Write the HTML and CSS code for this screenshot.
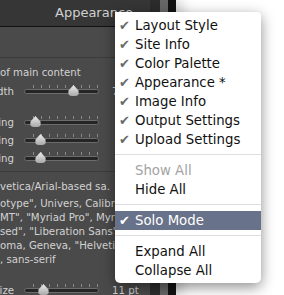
FILE: index.html
```html
<!DOCTYPE html>
<html lang="en">
<head>
  <meta charset="UTF-8">
  <title>Appearance panel menu</title>
  <link rel="stylesheet" href="styles.css">
</head>
<body>
  <div class="screen">
    <section class="panel">
      <div class="panel-body">
        <header class="panel-head">Appearance</header>
        <div class="group group-top"></div>
        <div class="group">
          <p class="note">of main content</p>
          <div class="row">
            <span class="lbl"><span>Width</span></span>
            <div class="slider"><div class="track"></div><div class="thumb" style="left:44px"></div></div>
            <span class="val">75</span>
          </div>
          <div class="row row-gap">
            <span class="lbl"><span>Spacing</span></span>
            <div class="slider"><div class="track"></div><div class="thumb" style="left:6px"></div></div>
          </div>
          <div class="row">
            <span class="lbl"><span>Padding</span></span>
            <div class="slider"><div class="track"></div><div class="thumb" style="left:11px"></div></div>
          </div>
          <div class="row">
            <span class="lbl"><span>Spacing</span></span>
            <div class="slider"><div class="track"></div><div class="thumb" style="left:11px"></div></div>
          </div>
        </div>
        <div class="group group-font">
          <p class="pick">vetica/Arial-based sa.</p>
          <div class="stack">
            <p>otype", Univers, Calibri, "Gill Sans",</p>
            <p>MT", "Myriad Pro", Myriad, "DejaVu</p>
            <p>sed", "Liberation Sans", "Nimbus</p>
            <p>oma, Geneva, "Helvetica Neue",</p>
            <p>, sans-serif</p>
          </div>
          <div class="row row-size">
            <span class="lbl"><span>Size</span></span>
            <div class="slider"><div class="track"></div><div class="thumb" style="left:14px"></div></div>
            <span class="val">11 pt</span>
          </div>
        </div>
      </div>
      <div class="rail">
        <span class="rail-a"></span><span class="rail-b"></span><span class="rail-c"></span>
      </div>
    </section>

    <!-- context menu -->
    <div class="menu">
      <div class="item"><span class="check">&#10004;</span>Layout Style</div>
      <div class="item"><span class="check">&#10004;</span>Site Info</div>
      <div class="item"><span class="check">&#10004;</span>Color Palette</div>
      <div class="item"><span class="check">&#10004;</span>Appearance *</div>
      <div class="item"><span class="check">&#10004;</span>Image Info</div>
      <div class="item"><span class="check">&#10004;</span>Output Settings</div>
      <div class="item"><span class="check">&#10004;</span>Upload Settings</div>
      <div class="sep"></div>
      <div class="item off"><span class="check"></span>Show All</div>
      <div class="item"><span class="check"></span>Hide All</div>
      <div class="sep"></div>
      <div class="item on"><span class="check">&#10004;</span>Solo Mode</div>
      <div class="sep"></div>
      <div class="item"><span class="check"></span>Expand All</div>
      <div class="item"><span class="check"></span>Collapse All</div>
    </div>
  </div>
</body>
</html>
```

FILE: styles.css
```css
*{box-sizing:border-box;margin:0;padding:0;}
html,body{height:100%;}
body{background:#fff;overflow:hidden;font-family:"DejaVu Sans",sans-serif;}
.screen{position:relative;width:284px;height:295px;overflow:hidden;background:#fff;}

/* ------- PANEL ------- */
.panel{display:flex;width:176px;height:100%;box-shadow:6px 0 12px rgba(0,0,0,.18);}
.panel-body{width:150px;background:#4a4a4a;color:#d2d2d2;font-size:10.2px;overflow:hidden;}
.panel-head{height:27px;background:#363636;border-bottom:1px solid #111;color:#d0d0d0;font-size:13px;padding:5px 0 0 55px;white-space:nowrap;}
.group{border-bottom:1px solid #3b3b3b;}
.group-top{height:31px;}
.note{line-height:14px;margin-top:8px;white-space:nowrap;}
.row{display:flex;align-items:center;height:18px;white-space:nowrap;}
.row:first-of-type{margin-top:2px;}
.row-gap{margin-top:13px;}
.group .row:last-child{margin-bottom:4px;}
.lbl{width:14px;overflow:hidden;display:flex;justify-content:flex-end;}
.val{margin-left:13px;}
.slider{position:relative;width:75px;height:12px;margin-left:10px;
  background:repeating-linear-gradient(90deg,transparent 0 7px,#8a8a8a 7px 8px) 0 0/100% 3px no-repeat;background-position:2px 0;}
.track{position:absolute;left:0;right:0;top:4px;height:5px;border-radius:3px;background:#252525;border:1px solid #6c6c6c;}
.thumb{position:absolute;top:0;width:11px;height:11px;border-radius:5px 5px 4px 4px;
  background:linear-gradient(#ececec,#a9a9a9);clip-path:polygon(50% 0,95% 50%,100% 100%,0 100%,5% 50%);}
.group-font{border-bottom:none;}
.pick{line-height:14px;margin-top:8px;white-space:nowrap;}
.stack{margin-top:3px;}
.stack p{line-height:14px;white-space:nowrap;}
.row-size{margin-top:14px;}

.rail{display:flex;flex:1;}
.rail-a{width:10px;background:#2c2c2c;}
.rail-b{width:8px;background:#676767;}
.rail-c{flex:1;background:#121212;}

/* ------- MENU ------- */
.menu{position:absolute;left:115px;top:12px;width:146px;background:#fff;border-radius:0 4px 5px 5px;
  padding:4px 0 3px;box-shadow:0 4px 14px rgba(0,0,0,.45);font-size:13.3px;color:#111;}
.item{display:flex;align-items:center;height:19px;white-space:nowrap;}
.check{width:20px;padding-left:4px;color:#6a6a6a;font-size:13px;line-height:1;}
.item.off{color:#a3a3a3;}
.item.on{background:#68728a;color:#fff;}
.item.on .check{color:#fff;}
.sep{height:1px;margin:5px 0 6px;background:#dedede;}
```
